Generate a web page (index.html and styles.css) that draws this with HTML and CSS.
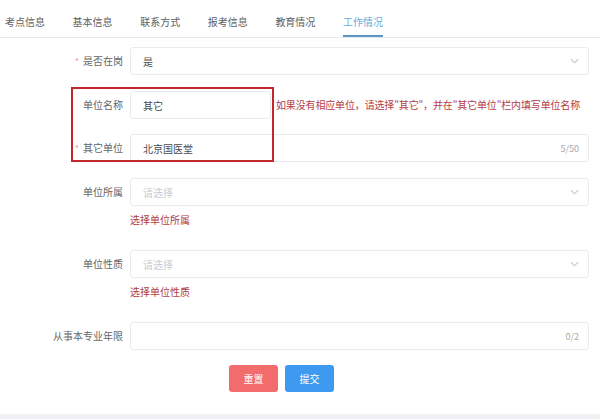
FILE: index.html
```html
<!DOCTYPE html>
<html lang="zh-CN">
<head>
<meta charset="utf-8">
<title>工作情况</title>
<link rel="stylesheet" href="styles.css">
</head>
<body>
<div class="page">
  <div class="tabs">
    <div class="tab">考点信息</div>
    <div class="tab">基本信息</div>
    <div class="tab">联系方式</div>
    <div class="tab">报考信息</div>
    <div class="tab">教育情况</div>
    <div class="tab active">工作情况</div>
  </div>

  <form class="form">
    <div class="item">
      <label class="label"><span class="star">*</span>是否在岗</label>
      <div class="control">
        <div class="input select"><span class="val">是</span><svg class="arrow" viewBox="0 0 10 6"><path d="M1 1l4 4 4-4" fill="none" stroke="#c0c4cc" stroke-width="1.2"/></svg></div>
      </div>
    </div>

    <div class="group">
      <div class="item">
        <label class="label">单位名称</label>
        <div class="control inline">
          <div class="input short"><span class="val">其它</span></div>
          <span class="hint">如果没有相应单位，请选择"其它"，并在"其它单位"栏内填写单位名称</span>
        </div>
      </div>
      <div class="item">
        <label class="label"><span class="star">*</span>其它单位</label>
        <div class="control">
          <div class="input"><span class="val">北京国医堂</span><span class="count">5/50</span></div>
        </div>
      </div>
      <div class="redbox"></div>
    </div>

    <div class="item">
      <label class="label">单位所属</label>
      <div class="control">
        <div class="input select"><span class="ph">请选择</span><svg class="arrow" viewBox="0 0 10 6"><path d="M1 1l4 4 4-4" fill="none" stroke="#c0c4cc" stroke-width="1.2"/></svg></div>
        <div class="error">选择单位所属</div>
      </div>
    </div>

    <div class="item">
      <label class="label">单位性质</label>
      <div class="control">
        <div class="input select"><span class="ph">请选择</span><svg class="arrow" viewBox="0 0 10 6"><path d="M1 1l4 4 4-4" fill="none" stroke="#c0c4cc" stroke-width="1.2"/></svg></div>
        <div class="error">选择单位性质</div>
      </div>
    </div>

    <div class="item">
      <label class="label">从事本专业年限</label>
      <div class="control">
        <div class="input"><span class="val"></span><span class="count">0/2</span></div>
      </div>
    </div>

    <div class="buttons">
      <button type="button" class="btn reset">重置</button>
      <button type="button" class="btn submit">提交</button>
    </div>
  </form>
  <div class="footer"></div>
</div>
</body>
</html>
```

FILE: styles.css
```css
* { box-sizing: border-box; }
html, body { margin: 0; padding: 0; background: #fff; }
body {
  font-family: "Noto Sans CJK SC", "Noto Sans", sans-serif;
  font-size: 10px;
  color: #666;
  width: 600px;
  height: 419px;
  overflow: hidden;
}
.page { display: flex; flex-direction: column; height: 419px; }

.tabs {
  display: flex;
  gap: 27.6px;
  padding-left: 5px;
  height: 38px;
  border-bottom: 1px solid #e6e8ec;
}
.tab {
  padding-top: 15px;
  line-height: 14px;
  height: 37px;
  color: #5e5e5e;
}
.tab.active {
  color: #6aa9dc;
  border-bottom: 2px solid #5b95c4;
}

.form { padding: 9px 11px 0 0; }
.item { display: flex; margin-bottom: 15px; }
.label {
  width: 130px;
  flex: none;
  text-align: right;
  padding-right: 7px;
  line-height: 28px;
  color: #666;
}
.star { color: #e8a5a8; margin-right: 4px; font-size: 9px; }
.control { flex: 1; }
.control.inline { display: flex; align-items: center; gap: 5px; }

.input {
  height: 28px;
  border: 1px solid #e9ebef;
  border-radius: 3px;
  display: flex;
  align-items: center;
  padding: 0 9px 0 12px;
  background: #fff;
}
.input.short { width: 141px; flex: none; }
.val { flex: 1; color: #4a4a4a; }
.ph { flex: 1; color: #c8cbd1; }
.count { color: #aaa; font-size: 9px; }
.arrow { width: 9px; height: 6px; }
.hint { color: #b53c44; white-space: nowrap; line-height: 14px; letter-spacing: -0.15px; }

.error {
  color: #b03a40;
  line-height: 14px;
  margin: 7px 0 8px;
}

.group { position: relative; }
.redbox {
  position: absolute;
  left: 71px;
  top: -4px;
  width: 203px;
  height: 75px;
  border: 2px solid #c4262e;
  pointer-events: none;
}

.buttons {
  display: flex;
  gap: 7px;
  padding-left: 229px;
  margin-top: 2px;
}
.btn {
  width: 49px;
  height: 27px;
  border: none;
  border-radius: 3px;
  color: #fff;
  font-family: inherit;
  font-size: 10px;
  padding: 0;
}
.reset { background: #f26c6e; }
.submit { background: #3e9af0; }

.footer { margin-top: auto; height: 5px; background: #eff1f5; }
```
